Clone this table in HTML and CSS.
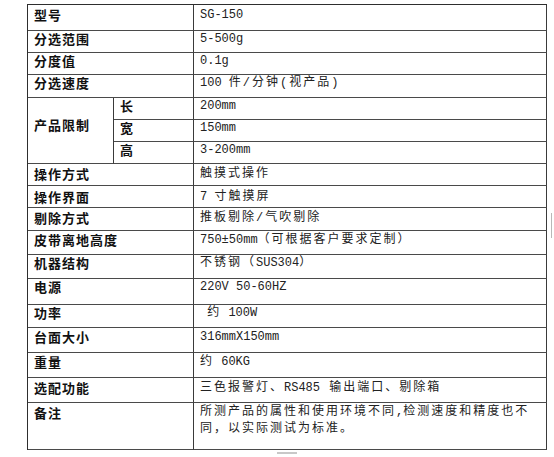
FILE: index.html
```html
<!DOCTYPE html>
<html lang="zh-CN">
<head>
<meta charset="utf-8">
<title>SG-150 参数</title>
<link rel="stylesheet" href="styles.css">
</head>
<body>
<div class="sheet">
  <div class="spec">
    <div class="c lab span2 p2">型号</div>
    <div class="c val p2"><span class="en">SG-150</span></div>

    <div class="c lab span2">分选范围</div>
    <div class="c val"><span class="en">5-500g</span></div>

    <div class="c lab span2">分度值</div>
    <div class="c val"><span class="en">0.1g</span></div>

    <div class="c lab span2">分选速度</div>
    <div class="c val"><span class="en">100 </span>件/分钟(视产品)</div>

    <div class="c lab group">产品限制</div>
    <div class="c lab sub">长</div>
    <div class="c val"><span class="en">200mm</span></div>
    <div class="c lab sub">宽</div>
    <div class="c val"><span class="en">150mm</span></div>
    <div class="c lab sub">高</div>
    <div class="c val"><span class="en">3-200mm</span></div>

    <div class="c lab span2 p2">操作方式</div>
    <div class="c val p2">触摸式操作</div>

    <div class="c lab span2 p3">操作界面</div>
    <div class="c val p3"><span class="en">7 </span>寸触摸屏</div>

    <div class="c lab span2 p2">剔除方式</div>
    <div class="c val p2">推板剔除/气吹剔除</div>

    <div class="c lab span2 p1">皮带离地高度</div>
    <div class="c val p1"><span class="en">750±50mm</span>（可根据客户要求定制）</div>

    <div class="c lab span2">机器结构</div>
    <div class="c val">不锈钢（<span class="en">SUS304</span>）</div>

    <div class="c lab span2">电源</div>
    <div class="c val"><span class="en">220V 50-60HZ</span></div>

    <div class="c lab span2">功率</div>
    <div class="c val"><span class="en">&nbsp;</span>约<span class="en"> 100W</span></div>

    <div class="c lab span2 p1">台面大小</div>
    <div class="c val p1"><span class="en">316mmX150mm</span></div>

    <div class="c lab span2 p1">重量</div>
    <div class="c val p1">约<span class="en"> 60KG</span></div>

    <div class="c lab span2 p2">选配功能</div>
    <div class="c val p2">三色报警灯、<span class="en">RS485</span> 输出端口、剔除箱</div>

    <div class="c lab span2 p2">备注</div>
    <div class="c val note p1">所测产品的属性和使用环境不同<span class="en">,</span>检测速度和精度也不<br>同，以实际测试为标准。</div>
  </div>
  <span class="mark-v"></span>
  <span class="mark-h"></span>
</div>
</body>
</html>
```

FILE: styles.css
```css
html, body {
  margin: 0;
  padding: 0;
  background: #ffffff;
}

body {
  padding: 4px 0 0 27px;
}

.sheet {
  position: relative;
  width: 527px;
  height: 453px;
}

.spec {
  display: grid;
  grid-template-columns: 86px 80px 353px;
  grid-template-rows: 26px 22px 22px 23px 22px 22px 22px 22px 22px 23px 24px 24px 26px 23px 25px 25px 25px 47px;
  width: max-content;
  border-top: 1px solid #2e2e2e;
  border-left: 1px solid #2e2e2e;
}

.c {
  box-sizing: border-box;
  border-right: 1px solid #3a3a3a;
  border-bottom: 1px solid #4a4a4a;
  padding: 0 0 0 6px;
  white-space: nowrap;
}

.lab {
  font-family: "Noto Sans CJK SC", sans-serif;
  font-weight: 700;
  font-size: 13px;
  line-height: 16px;
  letter-spacing: 1px;
  color: #111111;
}

.span2 {
  grid-column: span 2;
}

.group {
  grid-row: span 3;
  display: flex;
  align-items: center;
  padding-bottom: 12px;
}

.sub {
  padding-left: 6px;
}

.val {
  font-family: "Liberation Mono", "Noto Sans CJK SC", monospace;
  font-size: 12px;
  line-height: 16px;
  letter-spacing: 2px;
  color: #222222;
}

.val .en {
  letter-spacing: 0;
}

.note {
  line-height: 17px;
}

.p1 { padding-top: 1px; }
.p2 { padding-top: 2px; }
.p3 { padding-top: 3px; }

.mark-v {
  position: absolute;
  left: 524px;
  top: 209px;
  width: 1px;
  height: 25px;
  background: #b8b8b8;
}

.mark-h {
  position: absolute;
  left: 250px;
  top: 448px;
  width: 20px;
  height: 2px;
  background: #c8c8c8;
}
```
